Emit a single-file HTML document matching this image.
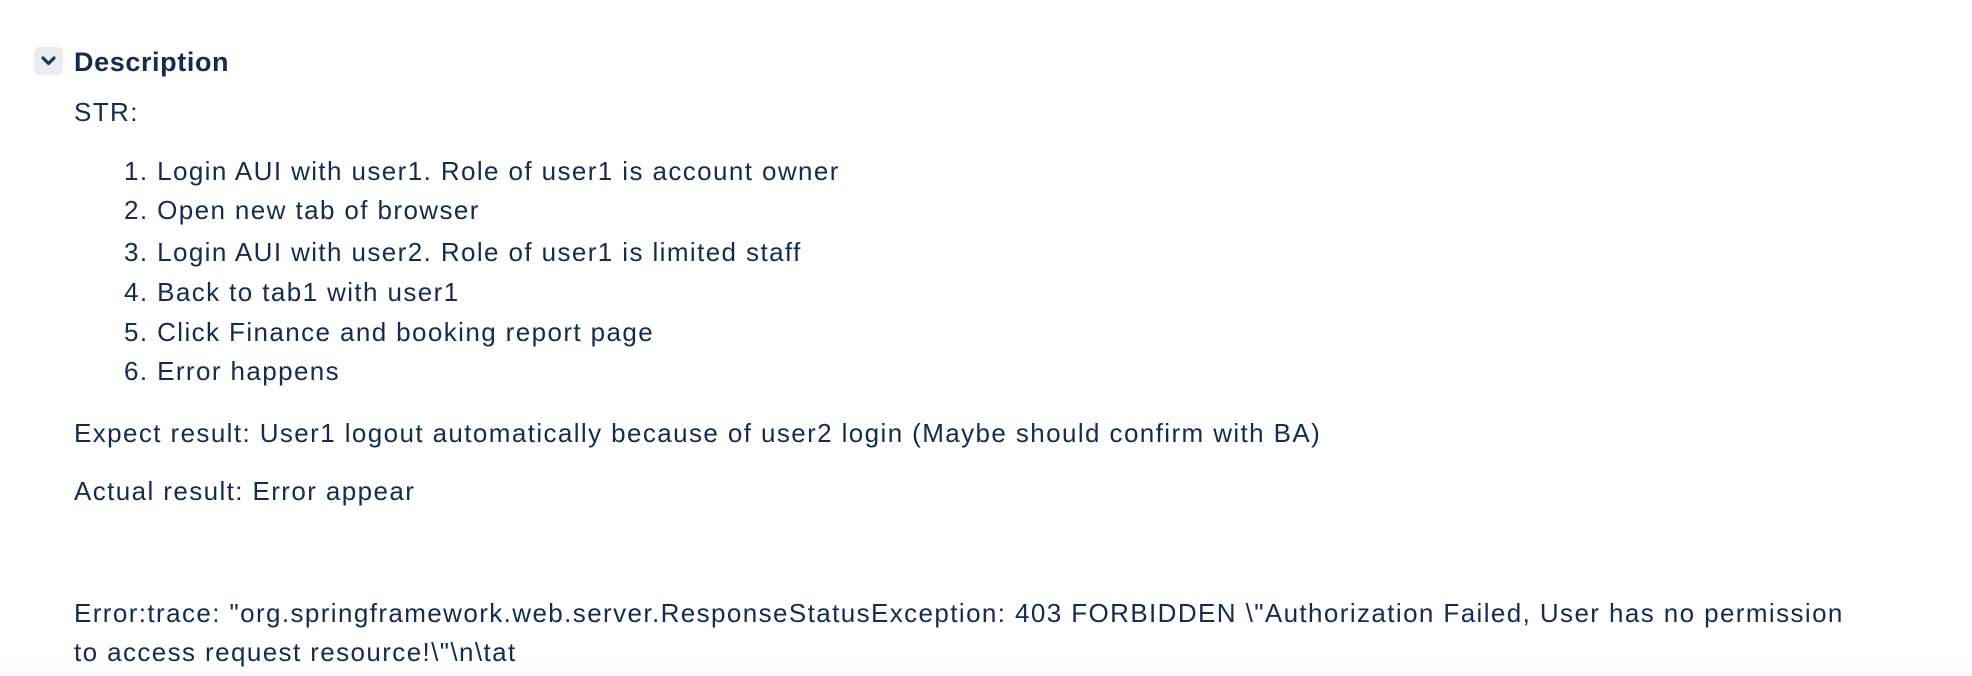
<!DOCTYPE html>
<html><head><meta charset="utf-8"><style>
html,body{margin:0;padding:0;width:1972px;height:676px;overflow:hidden;background:#fff;}
body{position:relative;font-family:"Liberation Sans",Arial,sans-serif;color:#172b4d;font-size:26px;letter-spacing:1.4px;}
.t{position:absolute;white-space:nowrap;line-height:30px;z-index:2;}
.box{position:absolute;left:34px;top:47px;width:29px;height:28px;background:#ebecf0;border-radius:5px;}
.fade{position:absolute;left:0;right:0;bottom:0;height:14px;background:linear-gradient(#fff,#f8f8f9);z-index:1;}
</style></head><body>
<div class="box"><svg width="29" height="28" viewBox="0 0 29 28"><path d="M9 11 L14.5 16.5 L20 11" fill="none" stroke="#253858" stroke-width="3.2" stroke-linecap="round" stroke-linejoin="round"/></svg></div>
<div class="t" style="left:74px;top:47px;font-weight:bold;font-size:27px;letter-spacing:0.6px;">Description</div>
<div class="t" style="left:74px;top:97px;">STR:</div>
<div class="t" style="left:124px;top:156px;">1. Login AUI with user1. Role of user1 is account owner</div>
<div class="t" style="left:124px;top:195px;">2. Open new tab of browser</div>
<div class="t" style="left:124px;top:237px;">3. Login AUI with user2. Role of user1 is limited staff</div>
<div class="t" style="left:124px;top:277px;">4. Back to tab1 with user1</div>
<div class="t" style="left:124px;top:317px;">5. Click Finance and booking report page</div>
<div class="t" style="left:124px;top:356px;">6. Error happens</div>
<div class="t" style="left:74px;top:418px;">Expect result: User1 logout automatically because of user2 login (Maybe should confirm with BA)</div>
<div class="t" style="left:74px;top:476px;">Actual result: Error appear</div>
<div class="t" style="left:74px;top:598px;">Error:trace: "org.springframework.web.server.ResponseStatusException: 403 FORBIDDEN \"Authorization Failed, User has no permission</div>
<div class="t" style="left:74px;top:637px;">to access request resource!\"\n\tat</div>
<div class="fade"></div>
</body></html>
